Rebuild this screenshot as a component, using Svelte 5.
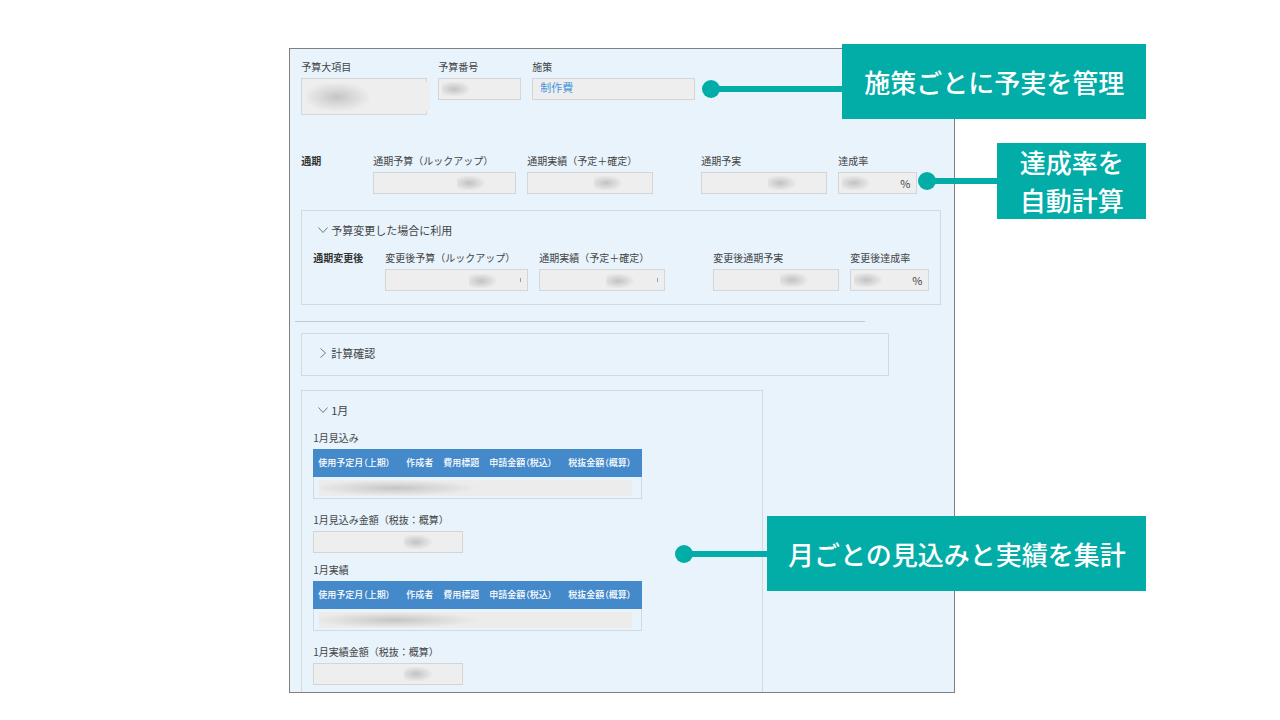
<script lang="ts">
	type Field = {
		id: string;
		label: string;
		size: 'xs' | 'sm' | 'md' | 'lg';
		unit?: string;
		spaced?: boolean;
		edge?: boolean;
	};

	const yearly: Field[] = [
		{ id: 'budget', label: '通期予算（ルックアップ）', size: 'lg' },
		{ id: 'actual', label: '通期実績（予定＋確定）', size: 'md' },
		{ id: 'diff', label: '通期予実', size: 'md', spaced: true },
		{ id: 'rate', label: '達成率', size: 'xs', unit: '%' }
	];

	const revised: Field[] = [
		{ id: 'rev-budget', label: '変更後予算（ルックアップ）', size: 'lg', edge: true },
		{ id: 'rev-actual', label: '通期実績（予定＋確定）', size: 'md', edge: true },
		{ id: 'rev-diff', label: '変更後通期予実', size: 'md', spaced: true },
		{ id: 'rev-rate', label: '変更後達成率', size: 'xs', unit: '%' }
	];

	const columns = ['使用予定月（上期）', '作成者', '費用標題', '申請金額（税込）', '税抜金額（概算）'];

	const january = [
		{ id: 'jan-plan', title: '1月見込み', total: '1月見込み金額（税抜：概算）' },
		{ id: 'jan-actual', title: '1月実績', total: '1月実績金額（税抜：概算）' }
	];
</script>

{#snippet chevron()}
	<svg class="chevron" viewBox="0 0 12 12" width="12" height="12" aria-hidden="true">
		<path d="M1.5 3.5 L6 8.5 L10.5 3.5" fill="none" stroke="#777" stroke-width="1" />
	</svg>
{/snippet}

{#snippet fields(lead: string, items: Field[])}
	<div class="row">
		<strong class="lead">{lead}</strong>
		{#each items as item}
			<div class="field {item.size}" class:spaced={item.spaced}>
				<label for={item.id}>{item.label}</label>
				<div class="control">
					<input id={item.id} class="masked" class:left={item.unit} class:edge={item.edge} readonly />
					{#if item.unit}<span class="unit">{item.unit}</span>{/if}
				</div>
			</div>
		{/each}
	</div>
{/snippet}

<main>
	<div class="record">
		<div class="panel">
			<div class="row top">
				<div class="field md">
					<label for="category">予算大項目</label>
					<div class="control">
						<textarea id="category" readonly></textarea>
						<span class="cover"></span>
					</div>
				</div>
				<div class="field sm">
					<label for="number">予算番号</label>
					<input id="number" class="masked left" readonly />
				</div>
				<div class="field xl">
					<span class="label">施策</span>
					<div class="box"><a href="#measure">制作費</a></div>
				</div>
			</div>

			{@render fields('通期', yearly)}

			<details class="group wide" open>
				<summary>{@render chevron()}予算変更した場合に利用</summary>
				{@render fields('通期変更後', revised)}
			</details>

			<hr />

			<details class="group check">
				<summary>{@render chevron()}計算確認</summary>
			</details>

			<details class="group month" open>
				<summary>{@render chevron()}1月</summary>
				{#each january as part}
					<section>
						<h3>{part.title}</h3>
						<table>
							<thead>
								<tr>
									{#each columns as column}
										<th scope="col">{column}</th>
									{/each}
								</tr>
							</thead>
							<tbody>
								<tr><td colspan="5"><div class="smudge"></div></td></tr>
							</tbody>
						</table>
						<div class="field total">
							<label for={part.id}>{part.total}</label>
							<input id={part.id} class="masked" readonly />
						</div>
					</section>
				{/each}
			</details>
		</div>

		<div class="callout measure">
			<span class="dot"></span><span class="line"></span>
			<p>施策ごとに予実を管理</p>
		</div>
		<div class="callout rate">
			<span class="dot"></span><span class="line"></span>
			<p>達成率を<br />自動計算</p>
		</div>
		<div class="callout monthly">
			<span class="dot"></span><span class="line"></span>
			<p>月ごとの見込みと実績を集計</p>
		</div>
	</div>
</main>

<style>
	:global(body) {
		margin: 0;
		background: #fff;
	}

	main {
		padding: 48px 0 27px;
		font-family: 'Noto Sans CJK JP', 'Noto Sans', sans-serif;
		font-size: 10px;
		line-height: 16px;
		color: #444;
	}

	main * {
		box-sizing: border-box;
	}

	.record {
		position: relative;
		width: 52%;
		min-width: 666px;
		margin-left: 22.6%;
	}

	.panel {
		padding: 10px 13px 0 11px;
		border: 1px solid #808080;
		background: #e8f3fc;
	}

	.row {
		display: flex;
		align-items: flex-start;
		gap: 11px;
	}

	.row.top {
		margin-bottom: 38px;
	}

	.lead {
		width: 61px;
		flex: none;
		color: #333;
		white-space: nowrap;
	}

	.field {
		display: flex;
		flex-direction: column;
		gap: 3px;
		flex: none;
		white-space: nowrap;
	}

	.xs {
		width: 79px;
	}

	.sm {
		width: 83px;
	}

	.md {
		width: 126px;
	}

	.lg {
		width: 143px;
	}

	.xl {
		width: 163px;
	}

	.total {
		width: 150px;
	}

	.spaced {
		margin-left: 37px;
	}

	.control {
		position: relative;
		display: flex;
	}

	input,
	textarea,
	.box {
		display: block;
		width: 100%;
		height: 22px;
		margin: 0;
		padding: 0 7px;
		border: 1px solid #d3d5d7;
		border-radius: 0;
		background-color: #eee;
		outline: none;
		resize: none;
		font: inherit;
	}

	.masked {
		background-image: radial-gradient(ellipse 17px 8px at 12px 7px, #c2c2c2, #d4d4d4 40%, #eee);
		background-repeat: no-repeat;
		background-size: 30px 14px;
		background-position: right 28px top 3px;
	}

	.masked.left {
		background-position: 3px 3px;
	}

	.masked.edge {
		background-image: radial-gradient(ellipse 17px 8px at 12px 7px, #c2c2c2, #d4d4d4 40%, #eee),
			linear-gradient(#7fa6c4, #7fa6c4);
		background-size: 30px 14px, 1px 4px;
		background-position: right 28px top 4px, right 6px top 8px;
	}

	textarea {
		height: 37px;
	}

	/* blanked-out value, runs slightly past the box */
	.cover {
		position: absolute;
		top: 4px;
		right: -3px;
		width: 123px;
		height: 29px;
		background: radial-gradient(ellipse 34px 15px at 30px 15px, #c4c4c4, #d6d6d6 40%, #eee);
	}

	.box {
		line-height: 16px;
	}

	.box a {
		font-size: 11px;
		color: #4596dc;
		text-decoration: none;
	}

	.unit {
		position: absolute;
		right: 7px;
		top: 3px;
		font-size: 11px;
	}

	.group {
		padding: 10px 11px 13px;
		border: 1px solid #d3dade;
	}

	.wide {
		margin-top: 16px;
	}

	hr {
		width: 570px;
		height: 1px;
		margin: 16px 0 11px -6px;
		border: 0;
		background: #c3cbd2;
	}

	.check {
		width: 588px;
	}

	.month {
		width: 462px;
		margin-top: 14px;
		padding-bottom: 7px;
		border-bottom: 0;
	}

	summary {
		display: flex;
		align-items: center;
		gap: 2px;
		padding-left: 4px;
		font-size: 11px;
		line-height: 18px;
		list-style: none;
		cursor: pointer;
	}

	details[open] summary {
		margin-bottom: 11px;
	}

	details:not([open]) .chevron {
		transform: rotate(-90deg);
	}

	section + section {
		margin-top: 9px;
	}

	h3 {
		margin: 0 0 3px;
		font-size: 10px;
		font-weight: 400;
	}

	table {
		width: 329px;
		height: 50px;
		margin-bottom: 13px;
		border-collapse: separate;
		border-spacing: 0;
		table-layout: fixed;
	}

	th {
		height: 28px;
		padding: 0 0 0 5px;
		background: #4489ca;
		color: #fff;
		font-size: 9px;
		font-weight: 500;
		font-feature-settings: 'palt';
		text-align: left;
		white-space: nowrap;
	}

	th:nth-child(1) {
		width: 88px;
	}

	th:nth-child(2) {
		width: 37px;
	}

	th:nth-child(3) {
		width: 46px;
	}

	th:nth-child(4) {
		width: 79px;
	}

	td {
		height: 22px;
		padding: 0 9px 0 5px;
		border: 1px solid #d3dade;
		border-top: 0;
	}

	.smudge {
		height: 16px;
		background: radial-gradient(ellipse 84px 8px at 76px 8px, #c4c4c4, #d6d6d6 40%, transparent) #ececec;
	}

	.callout {
		position: absolute;
		right: -191px;
		display: flex;
		align-items: center;
	}

	.callout p {
		margin: 0;
		min-height: 75px;
		display: flex;
		align-items: center;
		justify-content: center;
		background: #03ada7;
		color: #fff;
		font-size: 26px;
		font-weight: 500;
		line-height: 38px;
		white-space: nowrap;
	}

	.dot {
		width: 18px;
		height: 18px;
		border-radius: 50%;
		background: #03ada7;
	}

	.line {
		height: 6px;
		margin-left: -2px;
		background: #03ada7;
	}

	.measure {
		top: -4px;
	}

	.measure .dot,
	.measure .line {
		margin-top: 14px;
	}

	.measure .line {
		width: 124px;
	}

	.measure p {
		width: 304px;
	}

	.rate {
		top: 95px;
	}

	.rate .line {
		width: 63px;
	}

	.rate p {
		width: 149px;
	}

	.monthly {
		top: 468px;
	}

	.monthly .line {
		width: 76px;
	}

	.monthly p {
		width: 379px;
	}
</style>
